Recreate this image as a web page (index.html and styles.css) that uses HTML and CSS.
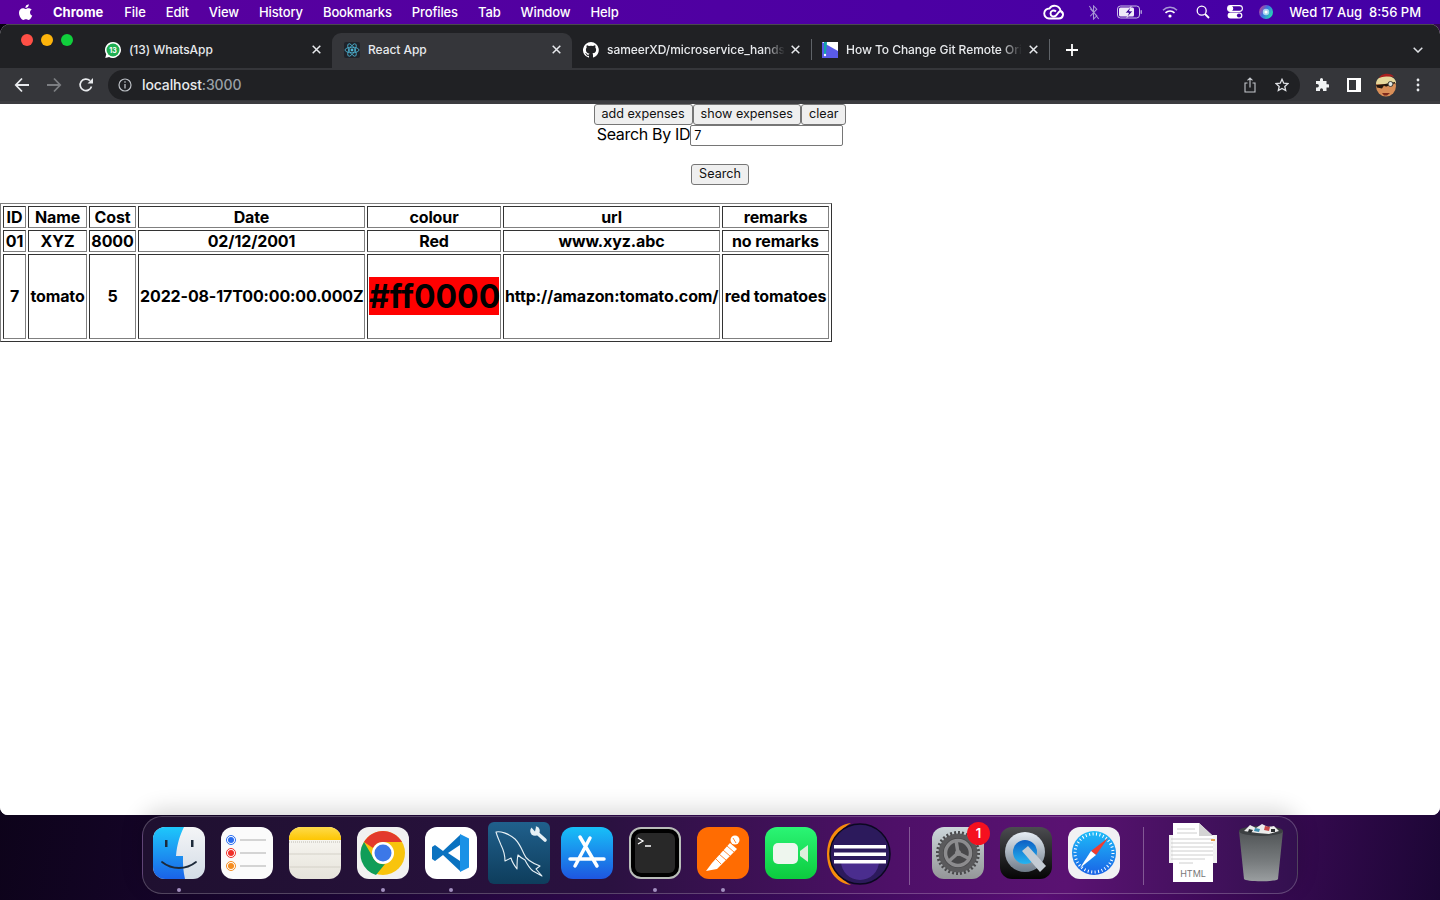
FILE: index.html
```html
<!DOCTYPE html>
<html lang="en">
<head>
    <meta charset="UTF-8">
    <meta name="viewport" content="width=device-width, initial-scale=1.0">
    <title>React App</title>
    <link rel="stylesheet" href="styles.css">
</head>
<body>
    <!-- mac menu bar -->
    <header class="menubar">
        <nav class="menu-left">
            <svg class="apple" viewBox="0 0 16 18"><path fill="#fff" d="M11.2 0c.1 1.100-.3 2.200-1 3-.7.800-1.700 1.400-2.800 1.300-.1-1.100.4-2.200 1-2.900C9.100.6 10.300.1 11.200 0zM14.600 6.100c-1.300.800-2 2-2 3.400 0 1.700 1 3 2.500 3.600-.4 1.100-.9 2.100-1.600 3.100-.8 1.100-1.600 1.800-2.700 1.800-1.100 0-1.600-.7-2.900-.7-1.300 0-1.800.7-2.900.7-1.100 0-1.900-.8-2.800-2C.8 14.300 0 12 0 9.900 0 6.500 2.200 4.700 4.400 4.700c1.200 0 2.200.8 2.900.8.700 0 1.900-.9 3.300-.9 1 0 2.900.3 4 1.500z"/></svg>
            <span class="app-name">Chrome</span>
            <span>File</span>
            <span>Edit</span>
            <span>View</span>
            <span>History</span>
            <span>Bookmarks</span>
            <span>Profiles</span>
            <span>Tab</span>
            <span>Window</span>
            <span>Help</span>
        </nav>
        <div class="menu-right">
            <svg class="status cc" viewBox="0 0 22 16"><g fill="none" stroke="#fff" stroke-width="1.900"><path d="M6 14.500h10a4 4 0 0 0 1.500-7.700A6 6 0 0 0 6.500 4.500 5 5 0 0 0 6 14.500z"/><path d="M13 7.500c-2-2-5.500-1-5.500 2s3.500 4 5.500 2l3-3.500c1.500-1.500 3.500 0 3 1.500"/></g></svg>
            <svg class="status bluetooth" viewBox="0 0 12 16"><path fill="none" stroke="#a897d6" stroke-width="1.100" d="M2 4l7 7.500L5.500 15V1L9 4.500 2 12M1 1l10 14"/></svg>
            <svg class="status battery" viewBox="0 0 26 14"><rect x=".5" y="1" width="22" height="12" rx="3" fill="none" stroke="#c9bfe6"/><rect x="2" y="2.500" width="15" height="9" rx="1.500" fill="#efeaf8"/><rect x="23.500" y="5" width="1.500" height="4" rx=".7" fill="#a897d6"/><path fill="#3c0a98" stroke="#fff" stroke-width=".7" d="M14 1.500l-6 6.500h3.500l-1.500 4.500 6-6.500h-3.500z"/></svg>
            <svg class="status wifi" viewBox="0 0 16 12"><path fill="none" stroke="#a897d6" stroke-width="1.500" d="M1 4.200a10 10 0 0 1 14 0"/><path fill="none" stroke="#fff" stroke-width="1.600" d="M3.500 6.800a6.500 6.500 0 0 1 9 0"/><circle cx="8" cy="10" r="1.600" fill="#fff"/></svg>
            <svg class="status search" viewBox="0 0 14 14"><circle cx="5.700" cy="5.700" r="4.500" fill="none" stroke="#fff" stroke-width="1.300"/><path stroke="#fff" stroke-width="1.800" d="M9 9l4 4"/></svg>
            <svg class="status control" viewBox="0 0 16 14"><rect x=".6" y=".6" width="14.800" height="5.800" rx="2.900" fill="none" stroke="#fff" stroke-width="1.100"/><circle cx="3.500" cy="3.500" r="2.700" fill="#fff"/><rect x=".6" y="7.600" width="14.800" height="5.800" rx="2.900" fill="#fff"/><circle cx="12" cy="10.500" r="2.100" fill="#4500a5"/></svg>
            <svg class="status siri" viewBox="0 0 14 14"><defs><linearGradient id="siriGrad" x1="0" y1="0" x2="1" y2=".6"><stop offset="0" stop-color="#e8327a"/><stop offset=".5" stop-color="#3f6fe2"/><stop offset="1" stop-color="#26d6b4"/></linearGradient></defs><circle cx="7" cy="7" r="7" fill="url(#siriGrad)"/><circle cx="7" cy="7" r="3.200" fill="#b8e6f4" opacity=".85"/><circle cx="7" cy="7" r="1.500" fill="#fff"/></svg>
            <span class="clock">Wed 17 Aug&nbsp; 8:56 PM</span>
        </div>
    </header>

    <main class="window">
        <div class="tabstrip">
            <div class="traffic">
                <span class="light red"></span>
                <span class="light yellow"></span>
                <span class="light green"></span>
            </div>
            <div class="tab tab-whatsapp">
                <svg class="favicon" viewBox="0 0 16 16"><path fill="#fff" d="M8 0a8 8 0 0 0-6.800 12.200L.3 16l3.800-1A8 8 0 1 0 8 0z"/><circle cx="8" cy="8" r="6.500" fill="#1fae52"/><text x="8" y="11" class="favicon-num">13</text></svg>
                <span class="tab-title">(13) WhatsApp</span>
                <svg class="tab-close" viewBox="0 0 9 9"><path stroke="#e8eaed" stroke-width="1.500" d="M.7.700l7.600 7.600M8.300.7L.7 8.300"/></svg>
            </div>
            <div class="tab tab-active">
                <svg class="favicon" viewBox="0 0 16 16"><rect width="16" height="16" rx="2" fill="#20232a"/><g fill="none" stroke="#4fb8d8" stroke-width=".8"><ellipse cx="8" cy="8" rx="7" ry="2.800"/><ellipse cx="8" cy="8" rx="7" ry="2.800" transform="rotate(60 8 8)"/><ellipse cx="8" cy="8" rx="7" ry="2.800" transform="rotate(120 8 8)"/></g><circle cx="8" cy="8" r="1.400" fill="#4fb8d8"/></svg>
                <span class="tab-title">React App</span>
                <svg class="tab-close" viewBox="0 0 9 9"><path stroke="#e8eaed" stroke-width="1.500" d="M.7.700l7.600 7.600M8.300.7L.7 8.300"/></svg>
            </div>
            <div class="tab tab-github">
                <svg class="favicon" viewBox="0 0 16 16"><path fill="#fff" d="M8 0a8 8 0 0 0-2.500 15.600c.4.100.5-.2.500-.4v-1.400c-2.200.5-2.700-1-2.700-1-.4-.9-.9-1.200-.9-1.200-.7-.5.100-.5.100-.5.800.100 1.200.8 1.200.8.700 1.200 1.900.9 2.300.7.100-.5.300-.9.500-1.100-1.800-.2-3.600-.9-3.600-4 0-.9.300-1.600.8-2.100-.1-.2-.4-1 .1-2.100 0 0 .7-.2 2.200.8a7.500 7.500 0 0 1 4 0c1.500-1 2.200-.8 2.200-.8.400 1.100.2 1.900.1 2.100.5.600.8 1.300.8 2.100 0 3.100-1.900 3.700-3.700 3.900.3.300.6.800.6 1.500v2.200c0 .2.100.5.600.4A8 8 0 0 0 8 0z"/></svg>
                <span class="tab-title tab-fade">sameerXD/microservice_hands</span>
                <svg class="tab-close" viewBox="0 0 9 9"><path stroke="#e8eaed" stroke-width="1.500" d="M.7.700l7.600 7.600M8.300.7L.7 8.300"/></svg>
            </div>
            <div class="tab tab-git">
                <svg class="favicon" viewBox="0 0 16 16"><rect width="16" height="16" fill="#5a5be8"/><path fill="#fff" d="M0 0h16v9z"/><path fill="#14a3a8" d="M2 0h3L4 12H2z"/><circle cx="3" cy="13" r="1.200" fill="#fff"/></svg>
                <span class="tab-title tab-fade">How To Change Git Remote Ori</span>
                <svg class="tab-close" viewBox="0 0 9 9"><path stroke="#e8eaed" stroke-width="1.500" d="M.7.700l7.600 7.600M8.300.7L.7 8.300"/></svg>
            </div>
            <svg class="new-tab" viewBox="0 0 12 12"><path stroke="#fff" stroke-width="1.800" d="M6 0v12M0 6h12"/></svg>
            <svg class="tab-list" viewBox="0 0 10 6"><path fill="none" stroke="#dfe1e5" stroke-width="1.500" d="M.7.700L5 5 9.300.7"/></svg>
        </div>

        <div class="toolbar">
            <svg class="nav-icon" viewBox="0 0 16 16"><path fill="none" stroke="#e8eaed" stroke-width="1.800" d="M15 8H2M8 1.500L1.800 8 8 14.500"/></svg>
            <svg class="nav-icon" viewBox="0 0 16 16"><path fill="none" stroke="#7c7e82" stroke-width="1.800" d="M1 8h13M8 1.500L14.200 8 8 14.500"/></svg>
            <svg class="nav-icon" viewBox="0 0 16 16"><path fill="none" stroke="#e8eaed" stroke-width="1.700" d="M13.500 9.500A5.800 5.800 0 1 1 12 3.700"/><path fill="#e8eaed" d="M9.500 6.500H15V1z"/></svg>
            <div class="omnibox">
                <svg class="info" viewBox="0 0 14 14"><circle cx="7" cy="7" r="6" fill="none" stroke="#bdc1c6" stroke-width="1.200"/><path stroke="#bdc1c6" stroke-width="1.300" d="M7 6v4.500M7 3.300v1.500"/></svg>
                <span class="url-host">localhost</span><span class="url-port">:3000</span>
                <svg class="share" viewBox="0 0 12 16"><path fill="none" stroke="#c4c7cc" stroke-width="1.100" d="M3.500 6H1v9h10V6H8.500M6 10.500V1M3.500 3.300L6 1l2.500 2.300"/></svg>
                <svg class="star" viewBox="0 0 16 16"><path fill="none" stroke="#dfe1e5" stroke-width="1.500" d="M8 1.500l2 4.400 4.800.5-3.600 3.200 1 4.700L8 11.900l-4.200 2.400 1-4.700L1.200 6.400 6 5.900z"/></svg>
            </div>
            <svg class="tool puzzle" viewBox="0 0 14 14"><path fill="#f1f3f4" d="M5 1.500a1.500 1.500 0 0 1 3 0V3h3.500v3.200H13a1.700 1.700 0 0 1 0 3.400h-1.500V13H8v-1.300a1.500 1.500 0 0 0-3 0V13H1V9.500h1.200a1.700 1.700 0 0 0 0-3.400H1V3h4z"/></svg>
            <svg class="tool panel" viewBox="0 0 14 14"><path fill="#fff" fill-rule="evenodd" d="M0 0h14v14H0zM2 2v10h7V2z"/></svg>
            <svg class="avatar" viewBox="0 0 22 24"><ellipse cx="11" cy="13" rx="10" ry="10.500" fill="#d98f58"/><path fill="#e6d89c" d="M1 11c0-5 4-8 10-8s10 3 10 7l-10 1z"/><path fill="#a81f1f" d="M4 5c2-5 12-6 15-1-4-.7-10-.7-15 1z"/><path fill="#24170f" d="M1 12l9-1 10-2v1.500l-6 1a3 3 0 0 1-5 1l-2 3-5-1z"/><circle cx="15.500" cy="11" r="2.500" fill="#dfe6e2" stroke="#3c3a30"/><path fill="#7f2a1c" d="M7 20h8l-3 2.500H9z"/></svg>
            <svg class="tool dots" viewBox="0 0 4 14"><g fill="#e8eaed"><circle cx="2" cy="2" r="1.400"/><circle cx="2" cy="7" r="1.400"/><circle cx="2" cy="12" r="1.400"/></g></svg>
        </div>

        <div class="page">
            <div class="controls">
                <div>
                    <button class="btn">add expenses</button><button class="btn">show expenses</button><button class="btn">clear</button>
                </div>
                <div class="search-row">
                    <label class="search-label">Search By ID</label><input class="search-input" type="text" value="7">
                </div>
                <button class="btn search-btn">Search</button>
            </div>
            <table class="expenses">
                <colgroup>
                    <col class="col-id"><col class="col-name"><col class="col-cost"><col class="col-date"><col class="col-colour"><col class="col-url"><col class="col-remarks">
                </colgroup>
                <tr class="short">
                    <th>ID</th><th>Name</th><th>Cost</th><th>Date</th><th>colour</th><th>url</th><th>remarks</th>
                </tr>
                <tr class="short">
                    <th>01</th><th>XYZ</th><th>8000</th><th>02/12/2001</th><th>Red</th><th>www.xyz.abc</th><th>no remarks</th>
                </tr>
                <tr class="tall">
                    <th>7</th><th>tomato</th><th>5</th><th>2022-08-17T00:00:00.000Z</th><th><span class="swatch">#ff0000</span></th><th>http://amazon:tomato.com/</th><th>red tomatoes</th>
                </tr>
            </table>
        </div>
    </main>

    <footer class="dock-area">
        <div class="dock">
            <div class="dock-item running">
                <svg class="app" viewBox="0 0 52 52"><defs><linearGradient id="finderL" x1="0" y1="0" x2="0" y2="1"><stop offset="0" stop-color="#1ec8fb"/><stop offset="1" stop-color="#1a62e8"/></linearGradient><linearGradient id="finderR" x1="0" y1="0" x2="0" y2="1"><stop offset="0" stop-color="#f4f5f7"/><stop offset="1" stop-color="#d3dce6"/></linearGradient></defs><rect width="52" height="52" rx="12" fill="url(#finderR)"/><path fill="url(#finderL)" d="M12 0h19c-4 8-7 17-8 29h7c-.3 8 .4 16 2 23H12A12 12 0 0 1 0 40V12A12 12 0 0 1 12 0z"/><path fill="#1d2a3a" d="M12 13h2.500v7H12zM38 13h2.500v7H38z"/><path fill="none" stroke="#1d2a3a" stroke-width="1.800" stroke-linecap="round" d="M9 35c10 8 24 8 34 0"/></svg>
            </div>
            <div class="dock-item">
                <svg class="app" viewBox="0 0 52 52"><rect width="52" height="52" rx="12" fill="#fbfbfb"/><g stroke="#c8c8c8" stroke-width="1.300"><path d="M19 13h26M19 26h26M19 39h26"/></g><circle cx="10" cy="13" r="4.500" fill="#fff" stroke="#2a6df0"/><circle cx="10" cy="13" r="3" fill="#2a6df0"/><circle cx="10" cy="26" r="4.500" fill="#fff" stroke="#f0302a"/><circle cx="10" cy="26" r="3" fill="#f0302a"/><circle cx="10" cy="39" r="4.500" fill="#fff" stroke="#f58c1f"/><circle cx="10" cy="39" r="3" fill="#f58c1f"/></svg>
            </div>
            <div class="dock-item">
                <svg class="app" viewBox="0 0 52 52"><defs><linearGradient id="notesPaper" x1="0" y1="0" x2="0" y2="1"><stop offset="0" stop-color="#fbfaf6"/><stop offset="1" stop-color="#e6e3db"/></linearGradient><linearGradient id="notesTop" x1="0" y1="0" x2="0" y2="1"><stop offset="0" stop-color="#fedb4b"/><stop offset="1" stop-color="#fdc602"/></linearGradient></defs><rect width="52" height="52" rx="12" fill="url(#notesPaper)"/><path fill="url(#notesTop)" d="M12 0h28a12 12 0 0 1 12 12v1H0v-1A12 12 0 0 1 12 0z"/><path stroke="#d4d1c8" d="M0 27h52M0 40h52"/><path stroke="#bdbab1" stroke-dasharray="1 1" d="M0 15h52"/></svg>
            </div>
            <div class="dock-item running">
                <svg class="app" viewBox="0 0 52 52"><rect width="52" height="52" rx="12" fill="#f1f1f1"/><circle cx="26" cy="26" r="22" fill="#f8c40d"/><path fill="#e33a2c" d="M7 15a22 22 0 0 1 38 0H26a11 11 0 0 0-10 6z"/><path fill="#0f9d58" d="M7 15l10 17a11 11 0 0 0 11 5l-9 11A22 22 0 0 1 7 15z"/><circle cx="26" cy="26" r="11" fill="#fff"/><circle cx="26" cy="26" r="8.500" fill="#3c78e8"/></svg>
            </div>
            <div class="dock-item running">
                <svg class="app" viewBox="0 0 52 52"><rect width="52" height="52" rx="12" fill="#fff"/><path fill="#0a72c0" d="M35 8L18 24 10 18l-3 2v12l3 2 8-6 17 16z"/><path fill="#fff" d="M35 18v16L23 26z"/><path fill="#1b91e6" d="M35 7l9 4.500v29L35 45z"/></svg>
            </div>
            <div class="dock-item dock-wide">
                <svg class="app-wide" viewBox="0 0 62 62"><defs><linearGradient id="mysqlBg" x1="0" y1="0" x2="0" y2="1"><stop offset="0" stop-color="#20608c"/><stop offset="1" stop-color="#0e3d5c"/></linearGradient></defs><rect width="62" height="62" rx="6" fill="url(#mysqlBg)"/><path fill="none" stroke="#e6f0f5" stroke-width="1.100" stroke-linejoin="round" d="M8 10c4-1 12 1 19 7 5 5 7 11 9 15 2 6 8 9 16 12l-4 3 6 7-9-5c-4-3-6-7-8-11-4-2-6-4-7-5-1 4-1 10-1 14-3-4-5-7-6-11l-6 3c0-7-2-12-4-16-2-5-4-9-5-13z"/><path stroke="#e6f0f5" stroke-width="3.600" stroke-linecap="round" d="M48 10l9 8"/><circle cx="47" cy="9" r="4.800" fill="#e6f0f5"/><path fill="#1f5f8b" d="M47 9.500L42 4l5-2 1 3z"/></svg>
            </div>
            <div class="dock-item">
                <svg class="app" viewBox="0 0 52 52"><defs><linearGradient id="storeBg" x1="0" y1="0" x2="0" y2="1"><stop offset="0" stop-color="#17c0f8"/><stop offset="1" stop-color="#1e56e0"/></linearGradient></defs><rect width="52" height="52" rx="12" fill="url(#storeBg)"/><g stroke="#fff" stroke-width="3.500" stroke-linecap="round"><path d="M19 10l17 29M29 11L14 39M9 32h34"/></g></svg>
            </div>
            <div class="dock-item running">
                <svg class="app" viewBox="0 0 52 52"><rect x="1" y="1" width="50" height="50" rx="11" fill="#000" stroke="#b9bdb9" stroke-width="2"/><rect x="6" y="6" width="40" height="40" rx="6" fill="#282828"/><path fill="none" stroke="#fff" stroke-width="1.300" d="M9 11l5 3-5 3"/><path stroke="#fff" stroke-width="1.500" d="M16 19h6"/></svg>
            </div>
            <div class="dock-item running">
                <svg class="app" viewBox="0 0 52 52"><rect width="52" height="52" rx="12" fill="#ff6c02"/><path fill="#fff" d="M33 16l7 6-20 20-11 2 6-8z"/><g stroke="#ff6c02" stroke-width=".8"><path d="M30 19l7 6M26 23l7 6M22 27l7 6M18 31l6 6"/></g><circle cx="38" cy="13" r="4.500" fill="#fff"/><path stroke="#ff6c02" stroke-width=".8" d="M36 11l3 5"/></svg>
            </div>
            <div class="dock-item">
                <svg class="app" viewBox="0 0 52 52"><defs><linearGradient id="faceBg" x1="0" y1="0" x2="0" y2="1"><stop offset="0" stop-color="#2bf575"/><stop offset="1" stop-color="#0ccb3e"/></linearGradient></defs><rect width="52" height="52" rx="12" fill="url(#faceBg)"/><rect x="8" y="16" width="25" height="21" rx="5" fill="#eef6ee"/><path fill="#dcefdc" d="M35 24l8-6v17l-8-6z"/></svg>
            </div>
            <div class="dock-item dock-eclipse">
                <svg class="app-eclipse" viewBox="0 0 64 62"><path fill="#f78c0c" d="M24 0C8 2 0 16 0 31s8 29 24 31C13 56 7 44 7 31S13 6 24 0z"/><circle cx="33" cy="31" r="30" fill="#2c1a5c" stroke="#0b0820" stroke-width="1.500"/><path fill="#4a2d8e" d="M14 38h38a19 19 0 0 1-38 0z"/><path fill="#fff" d="M7 22h52v3.500H7zM7 29.500h52v3.500H7zM7 37h52v3.500H7z"/></svg>
            </div>
            <span class="dock-sep"></span>
            <div class="dock-item dock-badged">
                <svg class="app" viewBox="0 0 52 52"><defs><linearGradient id="gearBg" x1="0" y1="0" x2="0" y2="1"><stop offset="0" stop-color="#ccd6da"/><stop offset="1" stop-color="#949698"/></linearGradient></defs><rect width="52" height="52" rx="12" fill="url(#gearBg)"/><circle cx="26" cy="26" r="19.500" fill="#5a5a5c"/><circle cx="26" cy="26" r="20.500" fill="none" stroke="#4a4a4c" stroke-width="3" stroke-dasharray="2 2"/><circle cx="26" cy="26" r="15" fill="#48484a"/><circle cx="26" cy="26" r="12.500" fill="none" stroke="#8c8c8e" stroke-width="3.500"/><g stroke="#8c8c8e" stroke-width="3.500"><path d="M26 26l-2-13M26 26l12 6M26 26l-10 9"/></g><circle cx="26" cy="26" r="3" fill="#8c8c8e"/></svg>
                <span class="badge">1</span>
            </div>
            <div class="dock-item">
                <svg class="app" viewBox="0 0 52 52"><defs><linearGradient id="qtBg" x1="0" y1="0" x2="0" y2="1"><stop offset="0" stop-color="#4b4c50"/><stop offset="1" stop-color="#050505"/></linearGradient><linearGradient id="qtRing" x1="0" y1="0" x2="0" y2="1"><stop offset="0" stop-color="#e6edf5"/><stop offset="1" stop-color="#6e7b89"/></linearGradient><linearGradient id="qtBlue" x1="0" y1="0" x2="0" y2="1"><stop offset="0" stop-color="#0d5fc4"/><stop offset="1" stop-color="#25b4f0"/></linearGradient></defs><rect width="52" height="52" rx="12" fill="url(#qtBg)"/><circle cx="25" cy="25" r="20" fill="url(#qtRing)"/><circle cx="25" cy="25" r="12" fill="url(#qtBlue)"/><path fill="#c4ccd4" d="M22 24l6-5 18 20-6 6z"/></svg>
            </div>
            <div class="dock-item">
                <svg class="app" viewBox="0 0 52 52"><defs><linearGradient id="safariBg" x1="0" y1="0" x2="0" y2="1"><stop offset="0" stop-color="#1dbcf8"/><stop offset="1" stop-color="#1a63e6"/></linearGradient></defs><rect width="52" height="52" rx="12" fill="#f1f1f3"/><circle cx="26" cy="26" r="22" fill="url(#safariBg)"/><circle cx="26" cy="26" r="19" fill="none" stroke="#fff" stroke-width="3" stroke-dasharray="1 2.500"/><path fill="#f03c30" d="M40 11L23 24l5 4z"/><path fill="#fff" d="M12 41l11-17 5 4z"/></svg>
            </div>
            <span class="dock-sep dock-sep-last"></span>
            <div class="dock-item">
                <svg class="app-doc" viewBox="0 0 52 60"><rect x="2" y="12" width="48" height="28" fill="#f2f2f2"/><path fill="#fff" d="M6 0h26l14 13v46H6z"/><path fill="#d4d4d4" d="M32 0v13h14z"/><g stroke="#c2c2c2" stroke-width=".8"><path d="M10 6h18M10 10h20M4 16h42M4 20h42M4 24h42M4 28h42M4 32h42M4 36h34M12 40h14"/></g><path fill="#e5a04b" d="M44 16h4v2h-4z"/><text x="26" y="54" class="doc-label">HTML</text></svg>
            </div>
            <div class="dock-item">
                <svg class="app-doc" viewBox="0 0 52 60"><defs><linearGradient id="trashBg" x1="0" y1="0" x2="0" y2="1"><stop offset="0" stop-color="#505456"/><stop offset=".6" stop-color="#777b7d"/><stop offset="1" stop-color="#9a9ea0"/></linearGradient></defs><path fill="url(#trashBg)" d="M4 8h44l-5 48c-1 3-33 3-34 0z"/><ellipse cx="26" cy="8" rx="22" ry="5" fill="#3c4042"/><path fill="#ececec" d="M9 8l6-6 6 3 6-4 6 3 6-1 5 5-10 3-12-1z"/><path fill="#c74a4a" d="M30 3l5 1-1 4-5-1z"/><path fill="#3f8fb0" d="M20 5l5 1-1 3-5-1z"/><path fill="#2b2e30" d="M14 6l4 1-2 3-3-1zM36 6l4 0 0 3-4 0z"/></svg>
            </div>
        </div>
    </footer>
</body>
</html>
```

FILE: styles.css
```css
* {
    margin: 0;
    padding: 0;
    box-sizing: border-box;
}
body {
    width: 1440px;
    height: 900px;
    overflow: hidden;
    display: flex;
    flex-direction: column;
    font-family: Inter, "Liberation Sans", sans-serif;
    background: linear-gradient(100deg, #07020f 0%, #1c0635 30%, #3c0c5c 60%, #5c0f78 75%, #1c0635 100%);
}

/* menu bar */
.menubar {
    height: 24px;
    flex: none;
    display: flex;
    justify-content: space-between;
    align-items: center;
    padding: 0 19px;
    background: linear-gradient(90deg, #5a009e 0%, #4f00a2 50%, #4300a6 100%);
    color: #fff;
    font-size: 13px;
    font-weight: 500;
}
.menu-left {
    display: flex;
    align-items: center;
    gap: 20px;
    letter-spacing: -0.12px;
}
.apple {
    width: 14px;
    height: 16px;
}
.app-name {
    margin-right: 1px;
    font-weight: 700;
    letter-spacing: 0;
}
.menu-right {
    display: flex;
    align-items: center;
}
.status {
    flex: none;
}
.cc {
    width: 22px;
    height: 16px;
}
.bluetooth {
    width: 12px;
    height: 15px;
    margin-left: 23px;
}
.battery {
    width: 26px;
    height: 14px;
    margin-left: 17px;
}
.wifi {
    width: 16px;
    height: 12px;
    margin-left: 19px;
}
.search {
    width: 14px;
    height: 14px;
    margin-left: 18px;
}
.control {
    width: 16px;
    height: 14px;
    margin-left: 17px;
}
.siri {
    width: 14px;
    height: 14px;
    margin-left: 16px;
}
.clock {
    margin-left: 16px;
    white-space: nowrap;
}

/* browser window */
.window {
    height: 791px;
    flex: none;
    display: flex;
    flex-direction: column;
    border-radius: 10px 10px 8px 8px;
    overflow: hidden;
    background: #fff;
}
.tabstrip {
    height: 44px;
    flex: none;
    display: flex;
    align-items: flex-end;
    position: relative;
    padding-left: 21px;
    background: #202124;
    border-top: 1px solid #4a4a4e;
    color: #e8eaed;
    font-size: 12px;
    font-weight: 500;
}
.traffic {
    display: flex;
    gap: 8px;
    width: 68px;
    height: 34px;
    flex: none;
}
.light {
    width: 12px;
    height: 12px;
    border-radius: 50%;
}
.red {
    background: #ff4f46;
}
.yellow {
    background: #fdb40b;
}
.green {
    background: #10cf3c;
}
.tab {
    height: 35px;
    flex: none;
    display: flex;
    align-items: center;
    padding: 0 11px 2px 16px;
}
.tab-whatsapp {
    width: 243px;
}
.tab-active {
    width: 240px;
    padding-left: 12px;
    background: #35363a;
    border-radius: 9px 9px 0 0;
}
.tab-github {
    width: 239px;
    padding-left: 11px;
}
.tab-git {
    width: 239px;
    height: 21px;
    margin-bottom: 8px;
    padding: 0 11px 0 10px;
    border-left: 1px solid #5f6368;
    border-right: 1px solid #5f6368;
}
.favicon {
    width: 16px;
    height: 16px;
    flex: none;
}
.favicon-num {
    font-size: 7px;
    font-weight: 700;
    fill: #fff;
    text-anchor: middle;
}
.tab-title {
    margin-left: 8px;
    white-space: nowrap;
    letter-spacing: -0.05px;
}
.tab-fade {
    -webkit-mask-image: linear-gradient(90deg, #000 88%, transparent 100%);
    mask-image: linear-gradient(90deg, #000 88%, transparent 100%);
}
.tab-close {
    width: 9px;
    height: 9px;
    flex: none;
    margin-left: auto;
}
.new-tab {
    width: 12px;
    height: 12px;
    position: absolute;
    left: 1066px;
    top: 19px;
}
.tab-list {
    width: 10px;
    height: 6px;
    position: absolute;
    left: 1413px;
    top: 22px;
}
.toolbar {
    height: 33px;
    flex: none;
    display: flex;
    align-items: center;
    padding-left: 14px;
    background: #35363a;
}
.nav-icon {
    width: 16px;
    height: 16px;
    flex: none;
    margin-right: 16px;
}
.omnibox {
    width: 1192px;
    height: 30px;
    margin-left: -2px;
    flex: none;
    display: flex;
    align-items: center;
    padding: 0 10px;
    border-radius: 15px;
    background: #202124;
    font-size: 14px;
    font-weight: 500;
    letter-spacing: -0.12px;
}
.info {
    width: 14px;
    height: 14px;
    margin-right: 10px;
    flex: none;
}
.url-host {
    color: #e8eaed;
}
.url-port {
    color: #9aa0a6;
}
.share {
    width: 12px;
    height: 16px;
    margin-left: auto;
}
.star {
    width: 14px;
    height: 14px;
    margin-left: 19px;
    margin-right: 1px;
}
.tool {
    flex: none;
}
.puzzle {
    width: 14px;
    height: 14px;
    margin-left: 15px;
}
.panel {
    width: 14px;
    height: 14px;
    margin-left: 18px;
}
.avatar {
    width: 22px;
    height: 24px;
    margin-left: 14px;
    flex: none;
}
.dots {
    width: 4px;
    height: 14px;
    margin-left: 19px;
}

/* the react page */
.page {
    flex: 1;
    background: #fff;
    border-top: 3px solid #3c3c40;
    color: #000;
}
.controls {
    text-align: center;
    height: 99px;
    font-size: 16px;
}
.btn {
    font-family: Inter, "Liberation Sans", sans-serif;
    font-size: 12.6px;
    line-height: 16px;
    height: 21px;
    padding: 0 7px 1px;
    color: #111;
    background: #efefef;
    border: 1px solid #767676;
    border-radius: 3px;
    vertical-align: top;
}
.search-row {
    height: 21px;
    line-height: 18px;
    white-space: nowrap;
}
.search-label {
    font-size: 16px;
    letter-spacing: -0.33px;
    vertical-align: top;
}
.search-input {
    width: 153px;
    height: 21px;
    padding: 0 3px;
    font-family: Inter, "Liberation Sans", sans-serif;
    font-size: 12.6px;
    border: 1px solid #767676;
    border-radius: 2px;
    vertical-align: top;
}
.search-btn {
    margin-top: 18px;
}
.expenses {
    width: 832px;
    table-layout: fixed;
    border-collapse: separate;
    border-spacing: 2px;
    border: 1px solid;
    border-color: #808080 #333 #333 #808080;
    font-size: 16px;
    letter-spacing: -0.12px;
}
.expenses th {
    padding: 0 1px;
    border: 1px solid;
    border-color: #333 #808080 #808080 #333;
    font-weight: 700;
    text-align: center;
    white-space: nowrap;
}
.short {
    height: 22px;
}
.tall {
    height: 85px;
}
.expenses .tall th {
    padding-bottom: 2px;
}
.col-id {
    width: 23px;
}
.col-name {
    width: 59px;
}
.col-cost {
    width: 47px;
}
.col-date {
    width: 227px;
}
.col-colour {
    width: 134px;
}
.col-url {
    width: 217px;
}
.col-remarks {
    width: 107px;
}
.swatch {
    display: block;
    font-size: 32px;
    line-height: 38px;
    padding-top: 1px;
    height: 38px;
    letter-spacing: 0;
    background: #ff0000;
}

/* dock */
.dock-area {
    flex: 1;
    display: flex;
    justify-content: center;
    align-items: flex-start;
    padding-top: 1px;
}
.dock {
    width: 1156px;
    height: 78px;
    display: flex;
    align-items: flex-start;
    padding: 10px 10px 0;
    gap: 16px;
    position: relative;
    border: 1px solid rgba(255, 255, 255, 0.22);
    border-radius: 20px;
    background: linear-gradient(90deg, #1f1030 0%, #2a1140 40%, #4e1068 65%, #5a1272 80%, #33104f 100%);
    box-shadow: 0 -6px 22px rgba(0, 0, 0, 0.16);
}
.dock-item {
    position: relative;
    width: 52px;
    height: 52px;
    flex: none;
}
.running::after {
    content: "";
    position: absolute;
    left: 24px;
    top: 61px;
    width: 4px;
    height: 4px;
    border-radius: 50%;
    background: #a38fc0;
}
.app {
    width: 52px;
    height: 52px;
    display: block;
}
.dock-wide {
    width: 62px;
    margin: -5px -5px 0;
}
.app-wide {
    width: 62px;
    height: 62px;
    display: block;
}
.dock-eclipse {
    width: 64px;
    margin: -4px -4px 0 -6px;
}
.app-eclipse {
    width: 64px;
    height: 62px;
    display: block;
}
.dock-sep {
    width: 1px;
    height: 58px;
    flex: none;
    margin: 0 6px;
    background: rgba(255, 255, 255, 0.3);
}
.dock-sep-last {
    margin: 0 7px;
}
.app-doc {
    width: 52px;
    height: 60px;
    display: block;
    margin-top: -4px;
}
.doc-label {
    font-size: 9px;
    fill: #777;
    text-anchor: middle;
}
.badge {
    position: absolute;
    right: -6px;
    top: -5px;
    width: 23px;
    height: 23px;
    border-radius: 50%;
    background: #f5101f;
    color: #fff;
    font-size: 13px;
    font-weight: 600;
    line-height: 23px;
    text-align: center;
}
```
